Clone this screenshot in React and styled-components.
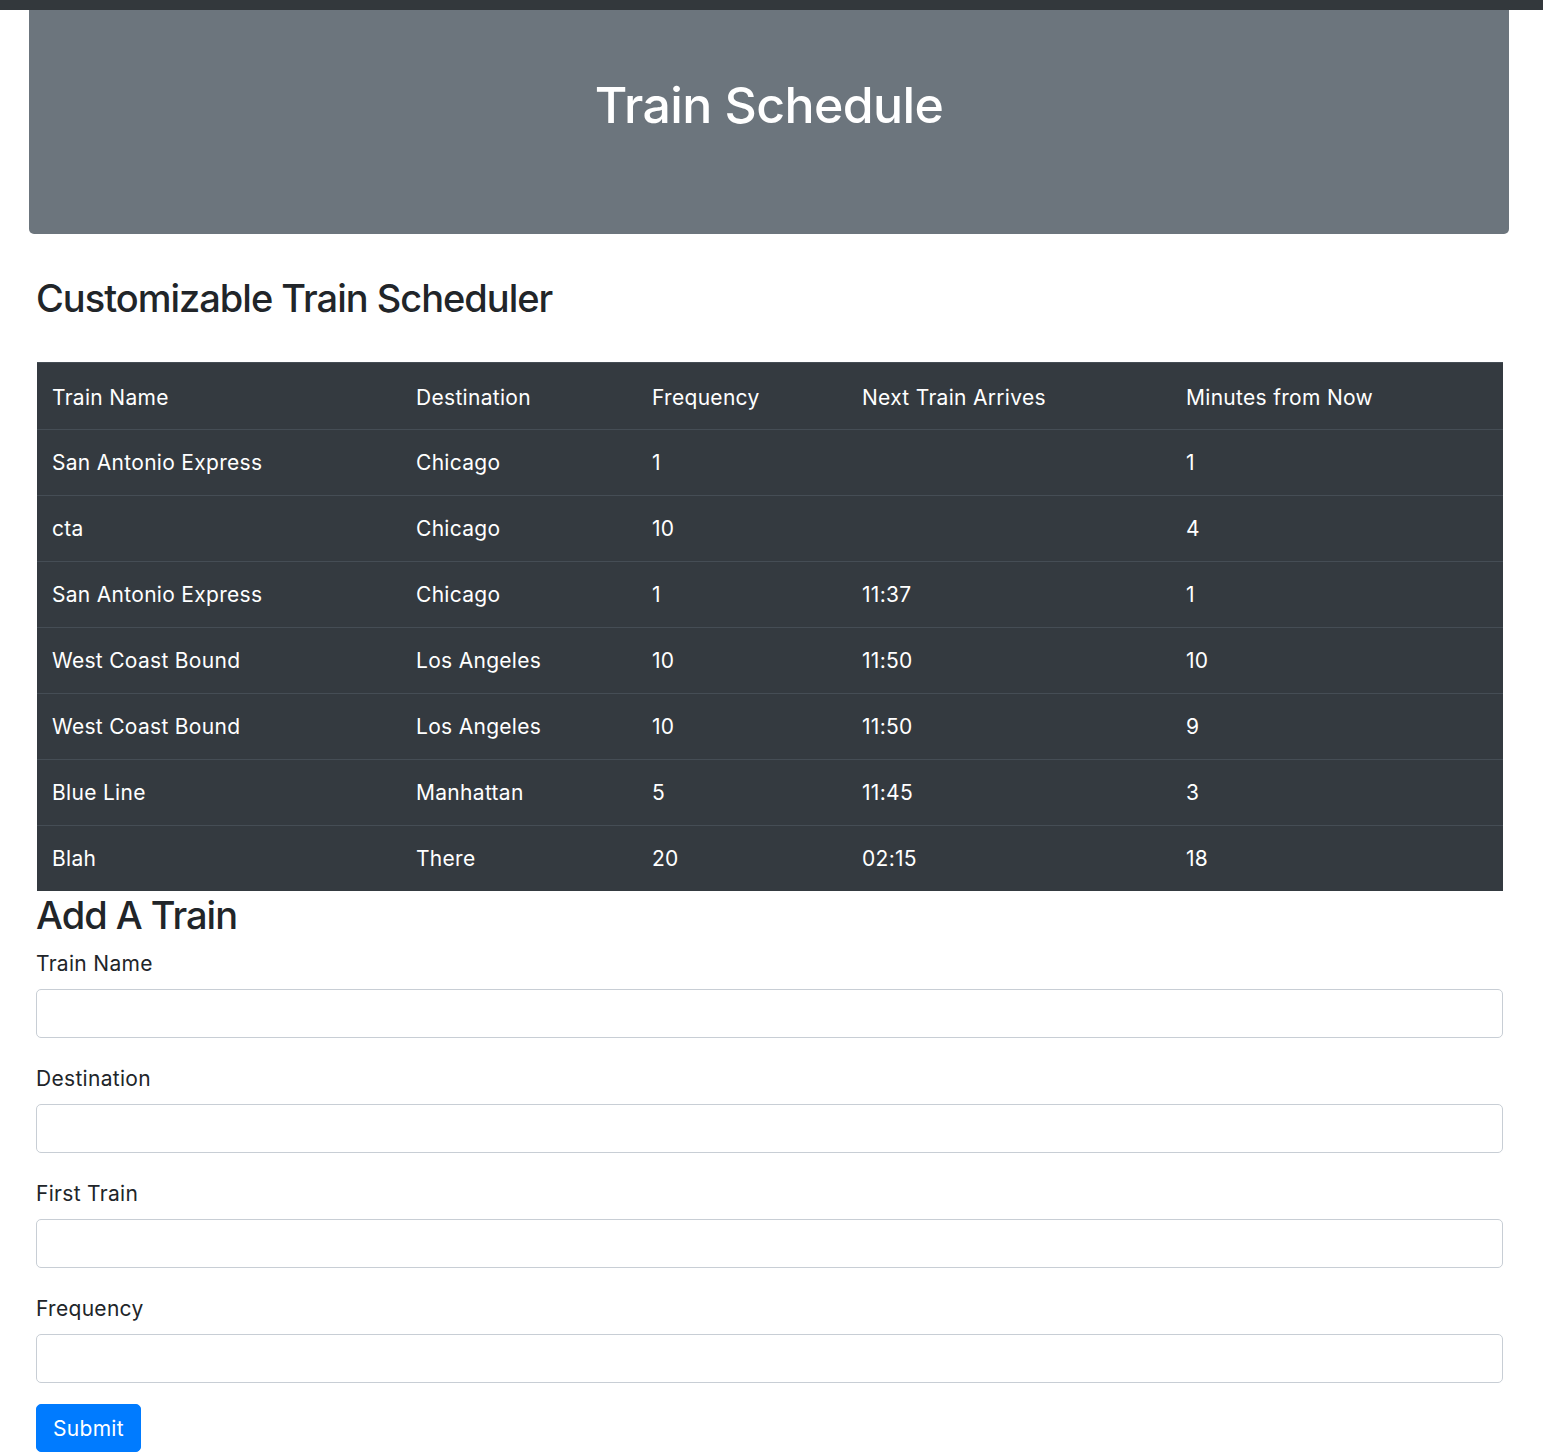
import React from 'react';
import styled, { createGlobalStyle } from 'styled-components';

const GlobalStyle = createGlobalStyle`
  body {
    margin: 0;
    font-family: Inter, "Noto Sans", sans-serif;
    font-size: 21px;
    letter-spacing: 0.3px;
    line-height: 1.5;
    color: #212529;
    background: #fff;
  }
  * { box-sizing: border-box; }
`;

const trains = [
  { name: 'San Antonio Express', dest: 'Chicago', freq: '1', next: '', mins: '1' },
  { name: 'cta', dest: 'Chicago', freq: '10', next: '', mins: '4' },
  { name: 'San Antonio Express', dest: 'Chicago', freq: '1', next: '11:37', mins: '1' },
  { name: 'West Coast Bound', dest: 'Los Angeles', freq: '10', next: '11:50', mins: '10' },
  { name: 'West Coast Bound', dest: 'Los Angeles', freq: '10', next: '11:50', mins: '9' },
  { name: 'Blue Line', dest: 'Manhattan', freq: '5', next: '11:45', mins: '3' },
  { name: 'Blah', dest: 'There', freq: '20', next: '02:15', mins: '18' },
];

const columns = [
  { label: 'Train Name', width: 364 },
  { label: 'Destination', width: 236 },
  { label: 'Frequency', width: 210 },
  { label: 'Next Train Arrives', width: 324 },
  { label: 'Minutes from Now', width: 332 },
];

const fields = ['Train Name', 'Destination', 'First Train', 'Frequency'];

const App = () => {
  return (
    <>
      <GlobalStyle />
      <TopBar />
      <Jumbotron>
        <Title>Train Schedule</Title>
      </Jumbotron>
      <Main>
        <Heading>Customizable Train Scheduler</Heading>
        <Table>
          <thead>
            <tr>
              {columns.map((c) => (
                <Th key={c.label} $w={c.width}>{c.label}</Th>
              ))}
            </tr>
          </thead>
          <tbody>
            {trains.map((t, i) => (
              <tr key={i}>
                <Td>{t.name}</Td>
                <Td>{t.dest}</Td>
                <Td>{t.freq}</Td>
                <Td>{t.next}</Td>
                <Td>{t.mins}</Td>
              </tr>
            ))}
          </tbody>
        </Table>
        <FormTitle>Add A Train</FormTitle>
        <form onSubmit={(e) => e.preventDefault()}>
          {fields.map((f) => (
            <FormGroup key={f}>
              <Label>{f}</Label>
              <Input type="text" />
            </FormGroup>
          ))}
          <SubmitButton type="submit">Submit</SubmitButton>
        </form>
      </Main>
    </>
  );
};

const TopBar = styled.div`
  height: 10px;
  background: #33383c;
`;

const Jumbotron = styled.div`
  margin: 0 34px 0 29px;
  padding: 65px 0 99px;
  background: #6c757d;
  border-radius: 0 0 5px 5px;
  text-align: center;
`;

const Title = styled.h1`
  margin: 0;
  font-size: 50px;
  font-weight: 500;
  letter-spacing: -0.6px;
  line-height: 60px;
  color: #fff;
`;

const Main = styled.main`
  padding: 0 40px 0 36px;
`;

const Heading = styled.h1`
  margin: 40px 0 40px;
  font-size: 38px;
  font-weight: 500;
  letter-spacing: -1px;
  line-height: 48px;
`;

const Table = styled.table`
  width: calc(100% - 1px);
  margin-left: 1px;
  border-collapse: collapse;
  table-layout: fixed;
  background: #343a40;
  color: #fff;
`;

const Th = styled.th`
  width: ${(p) => p.$w}px;
  padding: 20px 15px 16px;
  border-top: 1px solid #454d55;
  font-weight: 400;
  text-align: left;
  line-height: 30px;
`;

const Td = styled.td`
  padding: 18px 15px 17px;
  border-top: 1px solid #454d55;
  line-height: 30px;
`;

const FormTitle = styled.h2`
  margin: 0 0 10px;
  font-size: 38px;
  font-weight: 500;
  letter-spacing: -1px;
  line-height: 48px;
`;

const FormGroup = styled.div`
  margin-bottom: 26px;
  &:last-of-type {
    margin-bottom: 21px;
  }
`;

const Label = styled.label`
  display: block;
  margin-bottom: 10px;
  line-height: 30px;
`;

const Input = styled.input`
  display: block;
  width: 100%;
  height: 49px;
  padding: 0 15px;
  font-family: inherit;
  font-size: 20px;
  color: #495057;
  background: #fff;
  border: 1px solid #c8ced5;
  border-radius: 5px;
  outline: none;
`;

const SubmitButton = styled.button`
  height: 48px;
  padding: 0 16px;
  font-family: inherit;
  font-size: 21px;
  letter-spacing: 0.3px;
  color: #fff;
  background: #007bff;
  border: 1px solid #007bff;
  border-radius: 5px;
  cursor: pointer;
`;

export default App;
